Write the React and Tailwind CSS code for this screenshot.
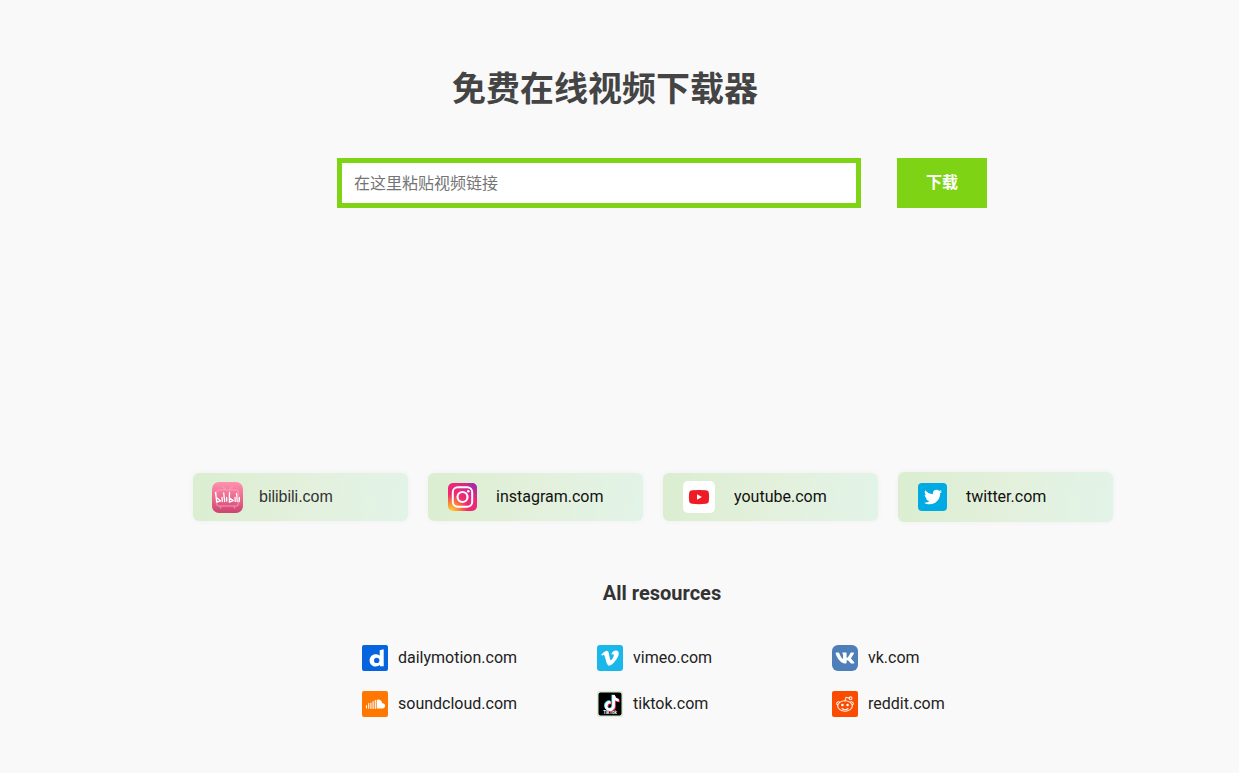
import React from "react";
import { FaVimeoV, FaVk, FaTiktok, FaTwitter } from "react-icons/fa";

function BilibiliIcon() {
  return (
    <svg viewBox="0 0 31 31" className="size-[31px] shrink-0" aria-hidden="true">
      <defs>
        <linearGradient id="bili" x1="0" y1="0" x2="0" y2="1">
          <stop offset="0" stopColor="#ff91ae" />
          <stop offset="0.5" stopColor="#ec6a90" />
          <stop offset="1" stopColor="#cb436e" />
        </linearGradient>
      </defs>
      <rect width="31" height="31" rx="7" fill="url(#bili)" />
      <g fill="none" stroke="#f9a3bd" strokeOpacity="0.6" strokeWidth="1.5" strokeLinecap="round">
        <rect x="4.5" y="8" width="22" height="16" rx="3" />
        <path d="M10.500 4.500l3 3M20.500 4.500l-3 3M8.500 25v1M22.500 25v1" />
      </g>
      <g fill="none" stroke="#fff" strokeWidth="1.300" strokeLinecap="round" strokeLinejoin="round">
        <path d="M3.500 10.500l1.300 9.700 3.800-1.300-3.200-2.600M10 15.500l.3 4M11.700 11l1 8.500M14.600 15.300l.1 3.700" />
        <path d="M17.500 10.500l-.2 9.700 4-1.600-3.400-2.300M23 15.500l.2 4M24.600 11.500l.6 8M27.400 15.500l-.2 4" />
      </g>
    </svg>
  );
}

function InstagramIcon() {
  return (
    <svg viewBox="0 0 29 28" className="h-7 w-[29px] shrink-0" aria-hidden="true">
      <defs>
        <radialGradient id="igWarm" cx="0.1" cy="1" r="0.95">
          <stop offset="0" stopColor="#ffd13d" />
          <stop offset="0.3" stopColor="#f98a3a" />
          <stop offset="0.62" stopColor="#f02a6e" />
          <stop offset="1" stopColor="#e8287f" />
        </radialGradient>
        <radialGradient id="igCool" cx="1" cy="0" r="0.7">
          <stop offset="0" stopColor="#8a2db5" />
          <stop offset="1" stopColor="#c52a9a" stopOpacity="0" />
        </radialGradient>
      </defs>
      <rect width="29" height="28" rx="5" fill="url(#igWarm)" />
      <rect width="29" height="28" rx="5" fill="url(#igCool)" />
      <rect x="4.8" y="4.3" width="19.4" height="19.4" rx="5" fill="none" stroke="#fff" strokeWidth="2" />
      <circle cx="14.5" cy="14" r="5" fill="none" stroke="#fff" strokeWidth="2.2" />
      <circle cx="20.3" cy="8.3" r="1.3" fill="#fff" />
    </svg>
  );
}

function YoutubeIcon() {
  return (
    <svg viewBox="0 0 32 32" className="size-8 shrink-0" aria-hidden="true">
      <rect width="32" height="32" rx="5" fill="#fff" />
      <path d="M9 9.3q7-.8 14 0 2.700.3 2.900 2.800.4 4 0 7.900-.2 2.500-2.900 2.800-7 .8-14 0-2.700-.3-2.900-2.800-.4-4 0-7.900.2-2.500 2.900-2.800z" fill="#ee1c27" />
      <path d="M14 13.200v5.600l4.900-2.800z" fill="#fff" />
    </svg>
  );
}

function TwitterIcon() {
  return (
    <span className="flex h-7 w-[29px] shrink-0 items-center justify-center rounded-[4px] bg-[#00aae3]">
      <FaTwitter className="size-[18px] text-white" aria-hidden="true" />
    </span>
  );
}

function DailymotionIcon() {
  return (
    <svg viewBox="0 0 26 26" className="size-[26px] shrink-0" aria-hidden="true">
      <rect width="26" height="26" rx="2" fill="#0664de" />
      <path d="M17.700 5.200l4-.9v17h-3.800v-1.500c-1.100 1.200-2.500 1.700-4.200 1.700-3.600 0-6.100-2.700-6.100-6.100 0-3.500 2.600-6.200 6.100-6.200 1.600 0 3 .5 4 1.500z" fill="#fff" />
      <circle cx="14.700" cy="15.400" r="2.700" fill="#0664de" />
    </svg>
  );
}

function VimeoIcon() {
  return (
    <span className="flex size-[26px] shrink-0 items-center justify-center rounded-[3px] bg-[#1ab7ea]">
      <FaVimeoV className="size-5 text-white" aria-hidden="true" />
    </span>
  );
}

function VkIcon() {
  return (
    <span className="flex size-[26px] shrink-0 items-center justify-center rounded-[6px] bg-[#4f7fb8]">
      <FaVk className="size-5 text-white" aria-hidden="true" />
    </span>
  );
}

function SoundcloudIcon() {
  return (
    <svg viewBox="0 0 26 26" className="size-[26px] shrink-0" aria-hidden="true">
      <rect width="26" height="26" rx="2" fill="#ff7700" />
      <path d="M4.500 14.500v2.500M6.700 12.500v4.800M8.900 12v5.500M11.100 10.500v7M13.300 9.300v8.200" stroke="#fff" strokeWidth="1.100" strokeLinecap="round" />
      <path d="M14.700 9q1-.5 2-.4c2 .2 3.200 1.700 3.400 3.600 1.700-.3 3 1 3 2.600s-1.200 2.800-2.700 2.800h-5.700z" fill="#fff" />
    </svg>
  );
}

function TiktokIcon() {
  return (
    <svg viewBox="0 0 26 26" className="size-[26px] shrink-0" aria-hidden="true">
      <rect width="26" height="26" rx="2" fill="#dcebd3" />
      <rect x="1.500" y="1.500" width="23" height="23" rx="2" fill="#000" />
      <FaTiktok x="6" y="3.500" width="13" height="14" color="#25f4ee" />
      <FaTiktok x="7.700" y="4.700" width="13" height="14" color="#fe2c55" />
      <FaTiktok x="6.800" y="4" width="13" height="14" color="#fff" />
      <text x="13" y="22.500" textAnchor="middle" fontFamily="Roboto, sans-serif" fontWeight="700" fontSize="4.500" fill="#fff">
        TikTok
      </text>
    </svg>
  );
}

function RedditIcon() {
  return (
    <svg viewBox="0 0 26 26" className="size-[26px] shrink-0" aria-hidden="true">
      <rect width="26" height="26" rx="2" fill="#fb4d02" />
      <g fill="none" stroke="#fff" strokeOpacity="0.9" strokeWidth="1.100">
        <ellipse cx="13" cy="15" rx="7.300" ry="5.200" />
        <path d="M7.800 11.300c-1.300-1.100-3.300-.2-3.100 1.400.1.700.6 1.200 1.300 1.500M18.200 11.300c1.300-1.100 3.300-.2 3.100 1.400-.1.700-.6 1.200-1.300 1.500" />
        <path d="M13 9.800l1-3.500 3.200.8M10 17.500c1.700 1.400 4.300 1.400 6 0" strokeLinecap="round" />
        <circle cx="18.600" cy="7.300" r="1.400" />
      </g>
      <circle cx="10.400" cy="14" r="1.300" fill="#fff" />
      <circle cx="15.600" cy="14" r="1.300" fill="#fff" />
    </svg>
  );
}

const featured = [
  { name: "bilibili.com", Icon: BilibiliIcon, layout: "h-12 gap-4 pl-[19px] font-['Liberation_Sans',sans-serif] text-[#333]" },
  { name: "instagram.com", Icon: InstagramIcon, layout: "h-12 gap-[19px] pl-5 text-[#111]" },
  { name: "youtube.com", Icon: YoutubeIcon, layout: "h-12 gap-[19px] pl-5 text-[#111]" },
  { name: "twitter.com", Icon: TwitterIcon, layout: "h-[50px] gap-[19px] pl-5 text-[#111]" },
];

const resources = [
  { name: "dailymotion.com", Icon: DailymotionIcon },
  { name: "vimeo.com", Icon: VimeoIcon },
  { name: "vk.com", Icon: VkIcon },
  { name: "soundcloud.com", Icon: SoundcloudIcon },
  { name: "tiktok.com", Icon: TiktokIcon },
  { name: "reddit.com", Icon: RedditIcon },
];

export default function App() {
  return (
    <div className="min-h-screen bg-[#f9f9f9] pt-16 pb-12 pl-[67px] font-['Roboto','Noto_Sans_CJK_SC',sans-serif]">
      <main className="mx-auto max-w-[920px]">
        <h1 className="pr-24 text-center text-[34px] leading-[50px] font-bold text-[#444]">
          免费在线视频下载器
        </h1>

        <form className="mt-11 flex justify-center gap-9 pl-[18px]" onSubmit={(e) => e.preventDefault()}>
          <input
            type="url"
            aria-label="在这里粘贴视频链接"
            placeholder="在这里粘贴视频链接"
            className="h-[50px] w-full max-w-[524px] min-w-0 border-[5px] border-[#7ed314] bg-white px-3 text-base text-[#333] outline-none placeholder:text-[#757575]"
          />
          <button type="submit" className="h-[50px] w-[90px] shrink-0 bg-[#7ed314] text-base font-bold text-white">
            下载
          </button>
        </form>

        <ul className="mt-[264px] grid grid-cols-4 items-center gap-5">
          {featured.map(({ name, Icon, layout }) => (
            <li key={name}>
              <a
                href={`#${name}`}
                className={`flex items-center rounded-[6px] bg-linear-100 from-[#dbeed0] via-[#e3f0dc] to-[#e2f4e8] text-base shadow-[0_0_6px_rgba(0,0,0,0.04)] ${layout}`}
              >
                <Icon />
                {name}
              </a>
            </li>
          ))}
        </ul>

        <section className="mt-14">
          <h2 className="pl-[18px] text-center text-xl leading-[30px] font-bold text-[#333]">All resources</h2>
          <ul className="mt-[37px] mr-[46px] ml-[169px] grid grid-cols-3 gap-y-5">
            {resources.map(({ name, Icon }) => (
              <li key={name}>
                <a href={`#${name}`} className="flex items-center gap-[10px] text-base leading-[26px] text-[#222]">
                  <Icon />
                  {name}
                </a>
              </li>
            ))}
          </ul>
        </section>
      </main>
    </div>
  );
}
